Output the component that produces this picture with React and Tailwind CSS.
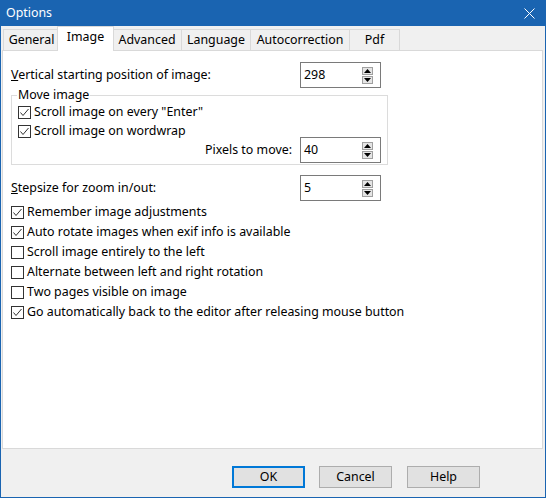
import React from "react";

function Check({ checked }) {
  return (
    <span className="w-[13px] h-[13px] border border-[#333333] bg-white flex items-center justify-center shrink-0">
      {checked && (
        <svg width="11" height="11" viewBox="0 0 11 11">
          <polyline points="1.5,5.5 4,8.5 9.5,2" fill="none" stroke="#333333" strokeWidth="1" />
        </svg>
      )}
    </span>
  );
}

function Spin({ value }) {
  return (
    <div className="w-[81px] h-[26px] border border-[#7a7a7a] bg-white flex items-center pl-[3px] pr-[7px] shrink-0">
      <span className="flex-1">{value}</span>
      <div className="flex flex-col gap-[1px]">
        <span className="w-[11px] h-[8px] bg-[#e5e5e5] border border-[#a0a0a0] flex items-center justify-center">
          <svg width="7" height="4" viewBox="0 0 7 4">
            <polygon points="0,4 7,4 3.5,0" fill="#000" />
          </svg>
        </span>
        <span className="w-[11px] h-[8px] bg-[#e5e5e5] border border-[#a0a0a0] flex items-center justify-center">
          <svg width="7" height="4" viewBox="0 0 7 4">
            <polygon points="0,0 7,0 3.5,4" fill="#000" />
          </svg>
        </span>
      </div>
    </div>
  );
}

function CheckRow({ checked, label, h = "h-[20px]" }) {
  return (
    <div className={`${h} flex items-center gap-[3px]`}>
      <Check checked={checked} />
      <span className="whitespace-nowrap">{label}</span>
    </div>
  );
}

export default function App() {
  return (
    <div className="w-[546px] h-[498px] flex flex-col bg-[#f0f0f0] border-x border-b border-[#1a64b1] font-['Noto_Sans',sans-serif] text-[12.4px] text-black leading-none">
      {/* Title bar */}
      <div className="h-[26px] shrink-0 bg-[#1a64b1] flex items-center justify-between pl-[5px] pr-[10px] text-white">
        <span>Options</span>
        <svg width="11" height="11" viewBox="0 0 11 11">
          <line x1="0.5" y1="0.5" x2="10.5" y2="10.5" stroke="#fff" strokeWidth="1" />
          <line x1="10.5" y1="0.5" x2="0.5" y2="10.5" stroke="#fff" strokeWidth="1" />
        </svg>
      </div>

      {/* Tabs */}
      <div className="h-[24px] shrink-0 flex items-end pl-[2px] relative z-10">
        <div className="w-[56px] h-[21px] border-l border-t border-[#d9d9d9] flex items-center justify-center">General</div>
        <div className="w-[57px] h-[25px] -mx-[2px] -mb-[1px] bg-white border-x border-t border-[#d9d9d9] flex items-center justify-center pb-[3px] relative z-10">Image</div>
        <div className="w-[69px] h-[21px] border-l border-t border-[#d9d9d9] flex items-center justify-center">Advanced</div>
        <div className="w-[69px] h-[21px] border-l border-t border-[#d9d9d9] flex items-center justify-center">Language</div>
        <div className="w-[99px] h-[21px] border-l border-t border-[#d9d9d9] flex items-center justify-center">Autocorrection</div>
        <div className="w-[51px] h-[21px] border-x border-t border-[#d9d9d9] flex items-center justify-center">Pdf</div>
      </div>

      {/* Panel */}
      <div className="h-[399px] shrink-0 ml-[1px] mr-[2px] bg-white border border-[#d9d9d9] pl-[8px] pt-[11px] flex flex-col">
        <div className="h-[26px] flex items-center">
          <span className="w-[289px]">
            <span className="underline">V</span>ertical starting position of image:
          </span>
          <Spin value="298" />
        </div>

        <div className="relative w-[377px] h-[70px] mt-[7px] border border-[#dcdcdc] pt-[7px] pl-[6px] pr-[6px] flex flex-col">
          <span className="absolute -top-[8px] left-[5px] bg-white px-[1px] leading-[14px]">Move image</span>
          <CheckRow checked label={'Scroll image on every "Enter"'} h="h-[19px]" />
          <CheckRow checked label="Scroll image on wordwrap" h="h-[19px]" />
          <div className="-mt-[4px] flex items-center justify-end gap-[8px]">
            <span>Pixels to move:</span>
            <Spin value="40" />
          </div>
        </div>

        <div className="h-[26px] mt-[10px] flex items-center">
          <span className="w-[289px]">
            <span className="underline">S</span>tepsize for zoom in/out:
          </span>
          <Spin value="5" />
        </div>

        <div className="mt-[1px] flex flex-col">
          <CheckRow checked label="Remember image adjustments" />
          <CheckRow checked label="Auto rotate images when exif info is available" />
          <CheckRow label="Scroll image entirely to the left" />
          <CheckRow label="Alternate between left and right rotation" />
          <CheckRow label="Two pages visible on image" />
          <CheckRow checked label="Go automatically back to the editor after releasing mouse button" />
        </div>
      </div>

      {/* Buttons */}
      <div className="flex-1 flex justify-end items-start pt-[17px] pr-[65px] gap-[14px]">
        <button className="w-[73px] h-[22px] bg-[#e1e1e1] border-2 border-[#0078d7] flex items-center justify-center">OK</button>
        <button className="w-[73px] h-[22px] bg-[#e1e1e1] border border-[#adadad] flex items-center justify-center">Cancel</button>
        <button className="w-[73px] h-[22px] ml-[1px] bg-[#e1e1e1] border border-[#adadad] flex items-center justify-center">Help</button>
      </div>
    </div>
  );
}
